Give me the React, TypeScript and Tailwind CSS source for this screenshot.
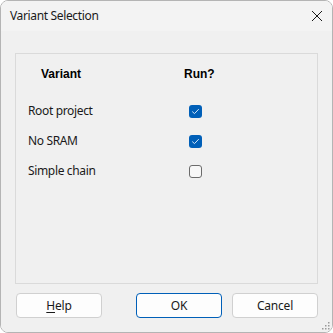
import React from 'react'

const ROWS = [
  { label: 'Root project', run: true },
  { label: 'No SRAM', run: true },
  { label: 'Simple chain', run: false },
]

function CheckBox({ checked }: { checked: boolean }) {
  if (checked) {
    return (
      <span className="w-[13px] h-[13px] rounded-[3px] bg-[#005fb8] flex items-center justify-center">
        <svg width="9" height="9" viewBox="0 0 9 9" fill="none">
          <path d="M1.5 4.8 L3.5 6.6 L7.5 2.4" stroke="#cfe3f7" strokeWidth="1" strokeLinecap="round" strokeLinejoin="round" />
        </svg>
      </span>
    )
  }
  return <span className="w-[13px] h-[13px] rounded-[3px] border border-[#6b6b6b] bg-[#f7f7f7] box-border" />
}

function Button({ children, primary }: { children: React.ReactNode; primary?: boolean }) {
  return (
    <button
      className={
        'w-[86px] h-[25px] rounded-[4px] bg-[#fdfdfd] text-[12px] tracking-[-0.2px] text-[#1a1a1a] flex items-center justify-center ' +
        (primary ? 'border border-[#005fb8]' : 'border border-[#d0d0d0]')
      }
    >
      {children}
    </button>
  )
}

export default function App() {
  return (
    <div
      className="w-[333px] h-[333px] bg-white"
      style={{ fontFamily: '"Noto Sans", "Open Sans", sans-serif' }}
    >
      <div className="w-full h-full rounded-[8px] border border-[#b4b4b4] overflow-hidden flex flex-col relative">
        {/* Title bar */}
        <div className="h-[30px] flex-none bg-[#f3f3f3] flex items-center justify-between pl-[9px] pr-[7px]">
          <span className="text-[12px] tracking-[-0.35px] text-[#1a1a1a]">Variant Selection</span>
          <svg width="12" height="12" viewBox="0 0 12 12" className="mr-[2px]">
            <path d="M1 1 L11 11 M11 1 L1 11" stroke="#1a1a1a" strokeWidth="1" />
          </svg>
        </div>

        {/* Body */}
        <div className="flex-1 bg-[#f0f0f0] flex flex-col px-[14px] pt-[22px]">
          <div className="h-[231px] border border-[#dadada] flex flex-col">
            <div
              className="flex items-center h-[20px] mt-[10px] text-[12px] font-bold text-black"
              style={{ fontFamily: '"Liberation Sans", Arial, sans-serif' }}
            >
              <span className="pl-[25px] w-[168px]">Variant</span>
              <span>Run?</span>
            </div>
            <div className="flex flex-col mt-[17px] gap-[10px]">
              {ROWS.map(r => (
                <div key={r.label} className="flex items-center h-[20px] text-[12px] tracking-[-0.35px] text-[#1a1a1a]">
                  <span className="pl-[12px] w-[173px]">{r.label}</span>
                  <CheckBox checked={r.run} />
                </div>
              ))}
            </div>
          </div>

          <div className="flex items-center mt-[9px] gap-[10px]">
            <div className="ml-[1px]">
              <Button>
                <span className="underline underline-offset-2">H</span>elp
              </Button>
            </div>
            <div className="flex-1" />
            <div className="ml-[1px]">
              <Button primary>OK</Button>
            </div>
            <Button>Cancel</Button>
          </div>
        </div>

        {/* Size grip */}
        <svg width="8" height="8" viewBox="0 0 8 8" className="absolute right-[2px] bottom-[2px]">
          <rect x="6" y="0" width="1.5" height="1.5" fill="#9a9a9a" />
          <rect x="3" y="3" width="1.5" height="1.5" fill="#9a9a9a" />
          <rect x="6" y="3" width="1.5" height="1.5" fill="#9a9a9a" />
          <rect x="0" y="6" width="1.5" height="1.5" fill="#9a9a9a" />
          <rect x="3" y="6" width="1.5" height="1.5" fill="#9a9a9a" />
          <rect x="6" y="6" width="1.5" height="1.5" fill="#9a9a9a" />
        </svg>
      </div>
    </div>
  )
}
